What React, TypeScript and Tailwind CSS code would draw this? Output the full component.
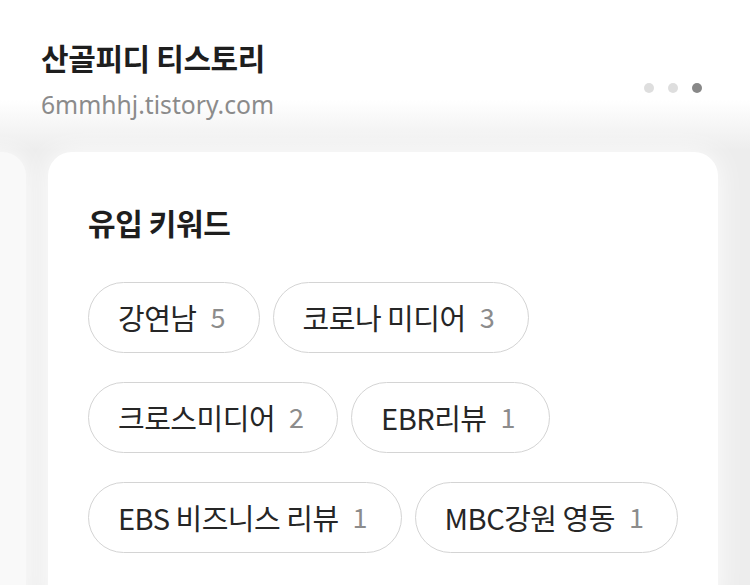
import React from 'react';

const keywords: { label: string; count: number }[] = [
  { label: '강연남', count: 5 },
  { label: '코로나 미디어', count: 3 },
  { label: '크로스미디어', count: 2 },
  { label: 'EBR리뷰', count: 1 },
  { label: 'EBS 비즈니스 리뷰', count: 1 },
  { label: 'MBC강원 영동', count: 1 },
];

const font = { fontFamily: '"Noto Sans CJK KR", "Noto Sans", sans-serif' };

export default function App() {
  return (
    <div
      className="w-[750px] h-[585px] overflow-hidden bg-[linear-gradient(180deg,#ffffff_0px,#ffffff_100px,#ededed_150px,#ededed_100%)]"
      style={font}
    >
      {/* 블로그 헤더 */}
      <div className="flex justify-between pl-[41px] pr-[48px] pt-[37px] h-[124px]">
        <div className="flex flex-col">
          <h1 className="text-[30px] font-bold leading-[40px] text-[#1e1e1e] tracking-[-0.4px]">산골피디 티스토리</h1>
          <p
            className="text-[24.7px] leading-[30px] text-[#8b8b8b] mt-[13px]"
            style={{ fontFamily: '"Noto Sans", sans-serif' }}
          >
            6mmhhj.tistory.com
          </p>
        </div>
        <div className="flex gap-[14px] mt-[46px]">
          <span className="w-[10px] h-[10px] rounded-full bg-[#dedede]" />
          <span className="w-[10px] h-[10px] rounded-full bg-[#dedede]" />
          <span className="w-[10px] h-[10px] rounded-full bg-[#888888]" />
        </div>
      </div>

      {/* 카드 캐러셀 */}
      <div className="flex gap-[22px] mt-[28px]">
        <div className="shrink-0 w-[670px] h-[460px] -ml-[644px] rounded-[24px] bg-[#f9f9f9] shadow-[0_0_24px_rgba(255,255,255,0.9)]" />
        <div className="shrink-0 w-[670px] h-[460px] rounded-[24px] bg-white px-[40px] pt-[50px] shadow-[0_0_28px_rgba(255,255,255,0.95)]">
          <h2 className="text-[30px] font-bold leading-[40px] text-[#1e1e1e] tracking-[-0.4px]">유입 키워드</h2>
          <div className="flex flex-wrap gap-x-[13px] gap-y-[29px] mt-[40px] w-[600px]">
            {keywords.map((k) => (
              <div
                key={k.label}
                className="flex items-center h-[71px] pl-[29px] pr-[33px] rounded-full border border-[#d4d4d4] bg-white"
              >
                <span className="text-[29px] text-[#262626] tracking-[-0.5px]">{k.label}</span>
                <span className="text-[27px] text-[#8c8c8c] ml-[14px]">{k.count}</span>
              </div>
            ))}
          </div>
        </div>
      </div>
    </div>
  );
}
